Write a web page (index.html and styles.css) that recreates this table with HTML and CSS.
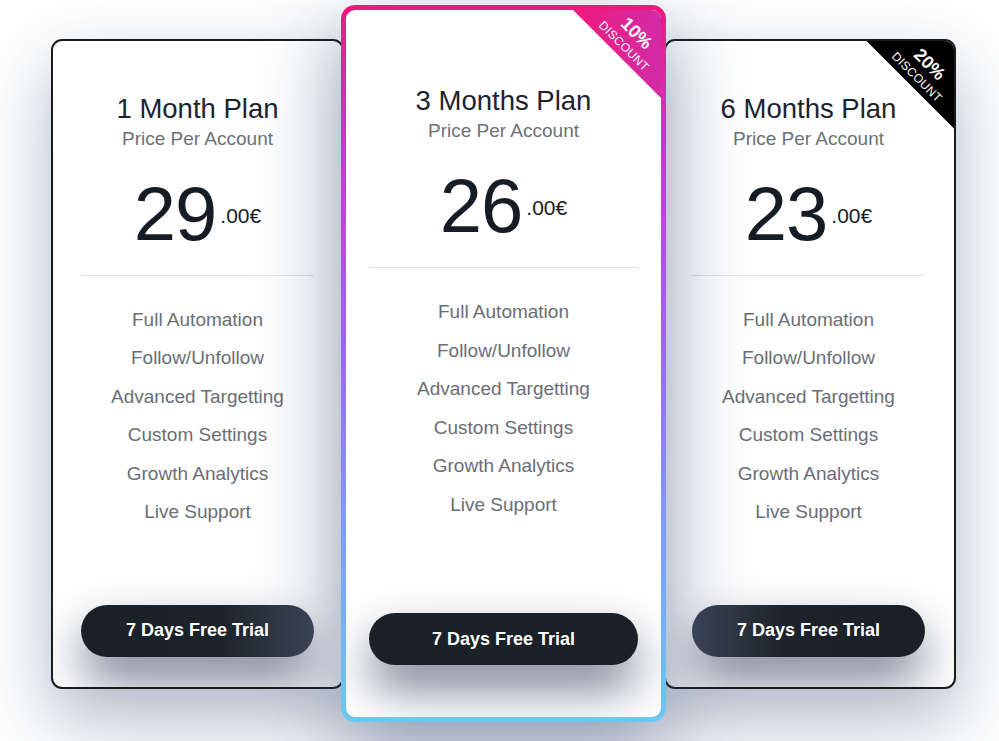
FILE: index.html
```html
<!DOCTYPE html>
<html lang="en">
<head>
<meta charset="utf-8">
<title>Pricing</title>
<link rel="stylesheet" href="styles.css">
</head>
<body>
<div class="plans">
  <div class="card side left-card">
    <h2 class="title">1 Month Plan</h2>
    <div class="sub">Price Per Account</div>
    <div class="price"><span class="big">29</span><span class="cents">.00€</span></div>
    <hr class="divider">
    <ul class="features">
      <li>Full Automation</li>
      <li>Follow/Unfollow</li>
      <li>Advanced Targetting</li>
      <li>Custom Settings</li>
      <li>Growth Analytics</li>
      <li>Live Support</li>
    </ul>
    <button class="btn btn-left">7 Days Free Trial</button>
  </div>
  <div class="card featured">
    <div class="ribbon ribbon-pink"><div class="ribbon-text"><span class="pct">10%</span><span class="disc">DISCOUNT</span></div></div>
    <h2 class="title">3 Months Plan</h2>
    <div class="sub">Price Per Account</div>
    <div class="price"><span class="big">26</span><span class="cents">.00€</span></div>
    <hr class="divider">
    <ul class="features">
      <li>Full Automation</li>
      <li>Follow/Unfollow</li>
      <li>Advanced Targetting</li>
      <li>Custom Settings</li>
      <li>Growth Analytics</li>
      <li>Live Support</li>
    </ul>
    <button class="btn btn-mid">7 Days Free Trial</button>
  </div>
  <div class="card side right-card">
    <div class="ribbon ribbon-black"><div class="ribbon-text"><span class="pct">20%</span><span class="disc">DISCOUNT</span></div></div>
    <h2 class="title">6 Months Plan</h2>
    <div class="sub">Price Per Account</div>
    <div class="price"><span class="big">23</span><span class="cents">.00€</span></div>
    <hr class="divider">
    <ul class="features">
      <li>Full Automation</li>
      <li>Follow/Unfollow</li>
      <li>Advanced Targetting</li>
      <li>Custom Settings</li>
      <li>Growth Analytics</li>
      <li>Live Support</li>
    </ul>
    <button class="btn btn-right">7 Days Free Trial</button>
  </div>
</div>
</body>
</html>
```

FILE: styles.css
```css
* { box-sizing: border-box; }
html, body {
  margin: 0;
  padding: 0;
  background: #ffffff;
  font-family: "Liberation Sans", Arial, sans-serif;
  overflow: hidden;
  height: 741px;
}
.plans {
  display: flex;
  align-items: center;
  padding: 5px 0 0 51px;
  width: 999px;
}
.card {
  position: relative;
  display: flex;
  flex-direction: column;
  align-items: stretch;
  text-align: center;
  background: #ffffff;
  overflow: hidden;
}
.side {
  width: 293px;
  height: 650px;
  border: 2px solid #1b1b1d;
  border-radius: 11px;
  padding: 53px 28px 30px;
  box-shadow: 0 30px 70px rgba(45, 65, 105, 0.38);
  z-index: 1;
}
.right-card {
  width: 292px;
  padding: 53px 29px 30px 26px;
}
.featured {
  width: 325px;
  height: 717px;
  margin: 0 -2px 0 -3px;
  border: 5px solid transparent;
  border-radius: 14px;
  padding: 76px 23px 52px;
  background:
    linear-gradient(#ffffff, #ffffff) padding-box,
    linear-gradient(180deg, #f3177b 0%, #c53bd0 22%, #9c66f4 48%, #7f9cf3 72%, #6cc7ee 100%) border-box;
  box-shadow: 0 30px 80px rgba(40, 60, 105, 0.55);
  z-index: 2;
}
.title {
  margin: 0;
  font-size: 27.5px;
  line-height: 30px;
  font-weight: 400;
  color: #1d2230;
}
.sub {
  margin-top: 5px;
  font-size: 19px;
  line-height: 20px;
  color: #6c7079;
}
.price {
  margin-top: 27px;
  height: 76px;
  line-height: 76px;
  color: #161c26;
  white-space: nowrap;
}
.big {
  font-size: 76px;
  line-height: 76px;
  letter-spacing: -1px;
}
.cents {
  font-size: 21px;
  line-height: 1;
  vertical-align: 17px;
  margin-left: 4px;
}
.divider {
  margin: 23px 0 0;
  border: 0;
  height: 1px;
  background: #e1e2e5;
}
.features {
  list-style: none;
  margin: 25px 0 0;
  padding: 0;
}
.features li {
  font-size: 19px;
  line-height: 38.6px;
  color: #6a6e76;
}
.btn {
  margin-top: auto;
  height: 52px;
  border: 0;
  border-radius: 26px;
  font-family: "Liberation Sans", Arial, sans-serif;
  font-weight: 700;
  font-size: 18px;
  color: #ffffff;
  background: #1b2129;
  box-shadow: 0 24px 48px rgba(30, 42, 75, 0.6);
}
.btn-left { background: linear-gradient(90deg, #1a2028 0%, #1c232b 60%, #3c4553 100%); }
.btn-right { background: linear-gradient(90deg, #3c4553 0%, #1c232b 40%, #1a2028 100%); }
.btn-mid { background: #1a2129; }
.ribbon {
  position: absolute;
  top: 0;
  right: 0;
  width: 88px;
  height: 88px;
  clip-path: polygon(0 0, 100% 0, 100% 100%);
}
.ribbon-pink { background: linear-gradient(90deg, #f01a7b, #d22ba6); }
.ribbon-black { background: #000000; }
.ribbon-text {
  position: absolute;
  left: 58px;
  top: 29px;
  width: 90px;
  display: flex;
  flex-direction: column;
  align-items: center;
  color: #ffffff;
  transform: translate(-50%, -50%) rotate(45deg);
}
.pct {
  font-size: 18px;
  line-height: 20px;
  font-weight: 700;
}
.disc {
  font-size: 12px;
  line-height: 16px;
  letter-spacing: 0.3px;
}
```
